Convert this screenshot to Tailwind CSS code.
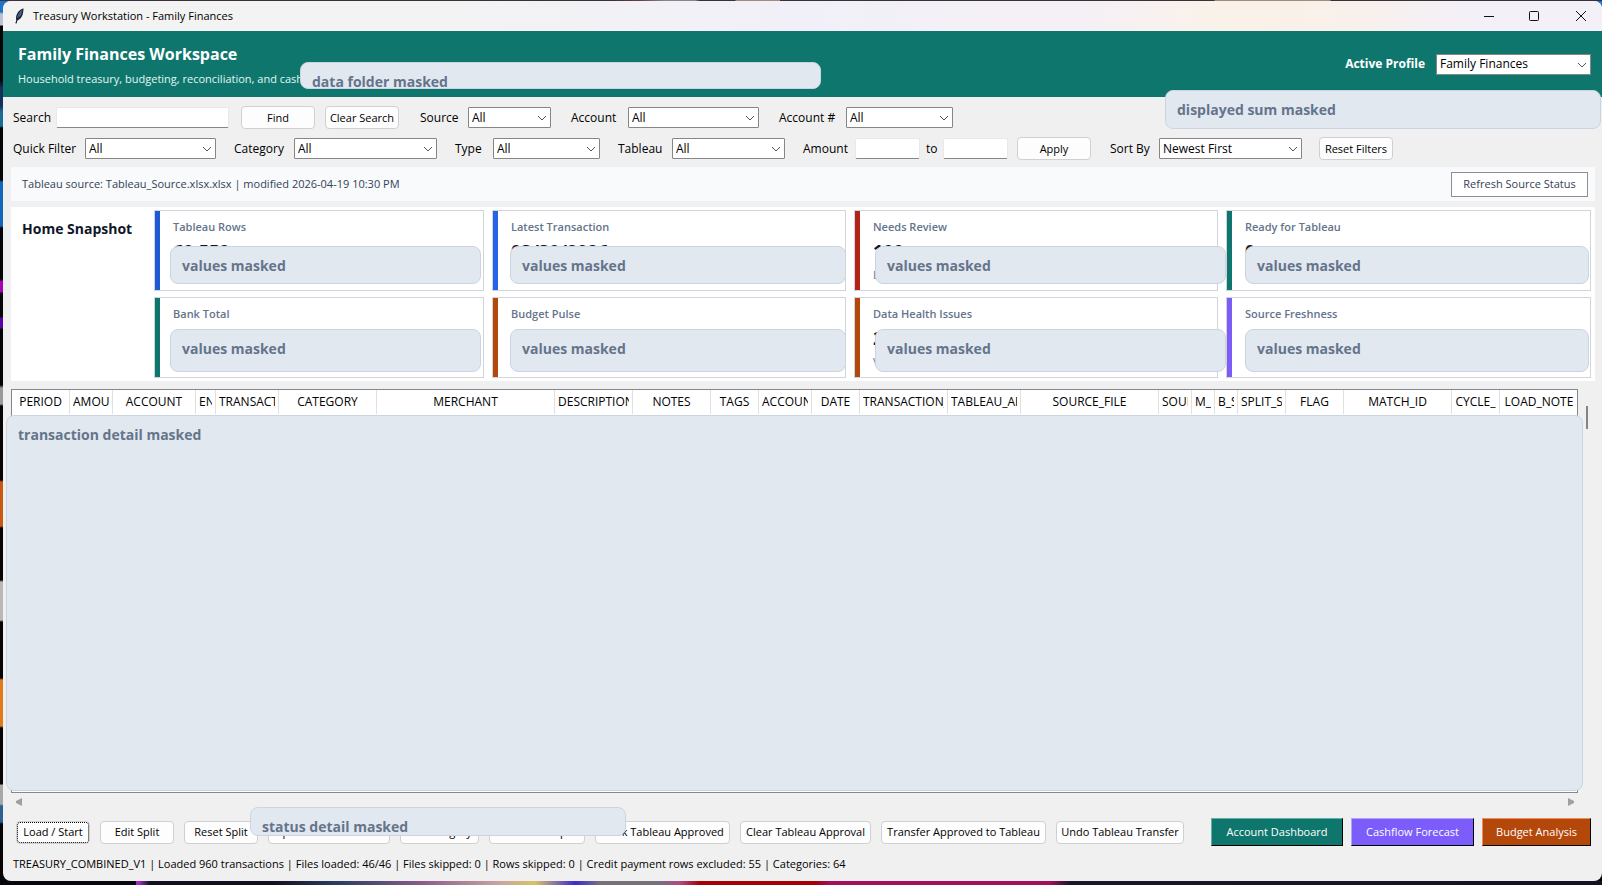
<!DOCTYPE html>
<html lang="en">
<head>
<meta charset="utf-8">
<title>Treasury Workstation - Family Finances</title>
<script src="https://cdn.jsdelivr.net/npm/@tailwindcss/browser@4"></script>
<style>
  .desk {
    background:
      linear-gradient(90deg, #08070f 0 136px, #a02bc0 136px 139px, #120f1e 150px 270px, #2b3f66 340px, #8a5a8c 420px, #c9a5a0 500px, #d8c06a 535px, #3a2bd0 575px, #77707c 600px 660px, #b04a80 680px, #a30008 700px 815px, #a0105c 830px 1050px, #1a1728 1070px, #15121f) bottom / 100% 4px no-repeat,
      linear-gradient(90deg, #3a2f3a 0 610px, #6b3c40 640px, #8a8490 665px 695px, #3a2f3a 700px 735px, #a08c78 736px 780px, #3a2f3a 780px 1214px, #a08c78 1215px 1330px, #3a2f3a 1331px) top / 100% 1px no-repeat,
      linear-gradient(180deg, #1f74c8 0 12px, #b8c4d0 14px 25px, #050507 26px 80px, #16305c 88px 106px, #1c6d96 112px 126px, #050507 128px 180px, #1467b8 182px 226px, #050507 228px 280px, #a800b4 281px 292px, #050507 293px 317px, #5a00a8 318px 328px, #050507 329px 385px, #9a9a9a 388px 404px, #050507 406px 480px, #c75a12 482px 526px, #050507 528px 580px, #b9b9b9 582px 620px, #050507 622px 678px, #e07a1a 680px 726px, #050507 728px 784px, #a8a8a8 785px 804px, #2c6090 806px 822px, #050507 824px);
  }
  .titlebar { background: linear-gradient(90deg, #f3f3f3 0, #f3f3f3 25%, #f1f0f8 50%, #f5f0f5 68%, #faf2e8 77%, #f8f0ea 84%, #f3f0f8 92%); }
</style>
</head>
<body class="desk h-screen min-h-[600px] flex flex-col pl-[3px] pt-px pb-1 text-[12px] leading-4 text-black" style="font-family:'Open Sans','Noto Sans',sans-serif">
<svg class="hidden"><symbol id="chev" viewBox="0 0 10 6"><path d="M1 1l4 4 4-4" fill="none" stroke="#555" stroke-width="1"/></symbol></svg>
<div class="flex-1 min-h-0 flex flex-col bg-[#f0f0f0] rounded-lg overflow-hidden">

  <!-- Title bar -->
  <div class="titlebar h-[30px] shrink-0 flex items-center pl-[11px]">
    <svg class="w-3 h-4 mr-[7px]" viewBox="0 0 12 16"><path d="M9.500 0.500C6 1 3 4.500 2.200 8.500c-.3 1.500-.2 2.500.2 3.500L1.500 15.500h1l.8-3C6.500 11.500 8.500 8 9 5c.3-1.800.5-3 .5-4.500z" fill="#16202c"/><path d="M8.500 1.500C5.500 3.500 3.500 7 2.900 11c2.500-1.500 4.500-4.500 5.200-7.500z" fill="#5d8fc9"/><path d="M8.500 2.500C6 5 3.500 9 2 15" stroke="#16202c" stroke-width=".8" fill="none"/></svg>
    <span class="text-[11px]">Treasury Workstation - Family Finances</span>
    <div class="ml-auto flex">
      <button aria-label="Minimize" class="w-[46px] h-7 flex items-center justify-center"><svg class="w-3 h-3" viewBox="0 0 12 12"><path d="M1 6.500h10" stroke="#111" fill="none"/></svg></button>
      <button aria-label="Maximize" class="w-[44px] h-7 flex items-center justify-center"><svg class="w-3 h-3" viewBox="0 0 12 12"><rect x="1.500" y="1.500" width="9" height="9" rx="1" stroke="#111" fill="none"/></svg></button>
      <button aria-label="Close" class="w-[46px] h-7 pl-1 flex items-center justify-center"><svg class="w-3 h-3" viewBox="0 0 12 12"><path d="M1 1l10 10M11 1L1 11" stroke="#111" fill="none"/></svg></button>
    </div>
  </div>

  <!-- Workspace header -->
  <header class="relative h-[66px] shrink-0 bg-[#0f766e] text-white flex items-center pl-[15px] pr-[11px]">
    <div class="flex-1 pt-[3px]">
      <h1 class="text-[16px] leading-6 font-bold">Family Finances Workspace</h1>
      <p class="pt-[3px] text-[11px] leading-5 text-[#e3f7f3]">Household treasury, budgeting, reconciliation, and cashflow</p>
    </div>
    <div class="flex items-center">
      <label for="profile" class="font-bold mr-[11px]">Active Profile</label>
      <div class="relative w-[155px]"><select id="profile" class="appearance-none block w-full h-[21px] bg-white border border-[#868686] text-black pl-[3px]"><option>Family Finances</option></select><svg class="absolute right-1 top-2 w-[10px] h-[6px] pointer-events-none"><use href="#chev"/></svg></div>
    </div>
    <div class="absolute left-[297px] top-[31px] w-[521px] h-[27px] rounded-lg bg-[#e2e8f0] border border-[#cbd5e1] text-[#64748b] text-[14px] font-bold pl-[11px] pt-[11px] leading-4 overflow-hidden">data folder masked</div>
    <div class="absolute right-px top-[59px] w-[436px] h-[39px] rounded-lg bg-[#e2e8f0] border border-[#cbd5e1] text-[#64748b] text-[14px] font-bold pl-[11px] pt-[11px] leading-4">displayed sum masked</div>
  </header>

  <!-- Filters -->
  <form class="shrink-0 px-[10px] pt-[9px] pb-[7px] flex flex-col gap-2 whitespace-nowrap">
    <div class="flex items-center h-[23px]">
      <label for="search" class="w-[43px]">Search</label>
      <input id="search" class="w-[173px] h-[21px] bg-white border border-[#e8e8e8] border-b-[#868686] rounded-[2px] px-1">
      <button type="button" class="ml-3 w-[74px] h-[23px] bg-[#fdfdfd] border border-[#d0d0d0] rounded text-[11px]">Find</button>
      <button type="button" class="ml-[10px] w-[74px] h-[23px] bg-[#fdfdfd] border border-[#d0d0d0] rounded text-[11px]">Clear Search</button>
      <label for="source" class="ml-[21px] w-[48px]">Source</label>
      <div class="relative w-[83px]"><select id="source" class="appearance-none block w-full h-[21px] bg-white border border-[#868686] rounded-[1px] pl-[3px]"><option>All</option></select><svg class="absolute right-1 top-2 w-[10px] h-[6px] pointer-events-none"><use href="#chev"/></svg></div>
      <label for="account" class="ml-5 w-[57px]">Account</label>
      <div class="relative w-[131px]"><select id="account" class="appearance-none block w-full h-[21px] bg-white border border-[#868686] rounded-[1px] pl-[3px]"><option>All</option></select><svg class="absolute right-1 top-2 w-[10px] h-[6px] pointer-events-none"><use href="#chev"/></svg></div>
      <label for="accountno" class="ml-5 w-[67px]">Account #</label>
      <div class="relative w-[107px]"><select id="accountno" class="appearance-none block w-full h-[21px] bg-white border border-[#868686] rounded-[1px] pl-[3px]"><option>All</option></select><svg class="absolute right-1 top-2 w-[10px] h-[6px] pointer-events-none"><use href="#chev"/></svg></div>
    </div>
    <div class="flex items-center h-[23px]">
      <label for="quick" class="w-[72px]">Quick Filter</label>
      <div class="relative w-[131px]"><select id="quick" class="appearance-none block w-full h-[21px] bg-white border border-[#868686] rounded-[1px] pl-[3px]"><option>All</option></select><svg class="absolute right-1 top-2 w-[10px] h-[6px] pointer-events-none"><use href="#chev"/></svg></div>
      <label for="category" class="ml-[18px] w-[60px]">Category</label>
      <div class="relative w-[143px]"><select id="category" class="appearance-none block w-full h-[21px] bg-white border border-[#868686] rounded-[1px] pl-[3px]"><option>All</option></select><svg class="absolute right-1 top-2 w-[10px] h-[6px] pointer-events-none"><use href="#chev"/></svg></div>
      <label for="type" class="ml-[18px] w-[38px]">Type</label>
      <div class="relative w-[107px]"><select id="type" class="appearance-none block w-full h-[21px] bg-white border border-[#868686] rounded-[1px] pl-[3px]"><option>All</option></select><svg class="absolute right-1 top-2 w-[10px] h-[6px] pointer-events-none"><use href="#chev"/></svg></div>
      <label for="tableau" class="ml-[18px] w-[54px]">Tableau</label>
      <div class="relative w-[113px]"><select id="tableau" class="appearance-none block w-full h-[21px] bg-white border border-[#868686] rounded-[1px] pl-[3px]"><option>All</option></select><svg class="absolute right-1 top-2 w-[10px] h-[6px] pointer-events-none"><use href="#chev"/></svg></div>
      <label for="amin" class="ml-[18px] w-[52px]">Amount</label>
      <input id="amin" class="w-[65px] h-[21px] bg-white border border-[#e8e8e8] border-b-[#868686] rounded-[2px] px-1">
      <label for="amax" class="ml-[6px] w-[17px]">to</label>
      <input id="amax" class="w-[65px] h-[21px] bg-white border border-[#e8e8e8] border-b-[#868686] rounded-[2px] px-1">
      <button type="button" class="ml-[9px] w-[74px] h-[23px] bg-[#fdfdfd] border border-[#d0d0d0] rounded text-[11px]">Apply</button>
      <label for="sort" class="ml-[19px] w-[49px]">Sort By</label>
      <div class="relative w-[143px]"><select id="sort" class="appearance-none block w-full h-[21px] bg-white border border-[#868686] rounded-[1px] pl-[3px]"><option>Newest First</option></select><svg class="absolute right-1 top-2 w-[10px] h-[6px] pointer-events-none"><use href="#chev"/></svg></div>
      <button type="button" class="ml-[17px] w-[74px] h-[23px] bg-[#fdfdfd] border border-[#d0d0d0] rounded text-[11px]">Reset Filters</button>
    </div>
  </form>

  <!-- Source status -->
  <div class="shrink-0 ml-2 mr-[7px] h-[34px] bg-[#f8fafc] flex items-center justify-between pl-[11px] pr-[7px] text-[11px] text-[#334155]">
    <span>Tableau source: Tableau_Source.xlsx.xlsx | modified 2026-04-19 10:30 PM</span>
    <button class="w-[137px] h-[25px] bg-white border border-[#8c8f96]">Refresh Source Status</button>
  </div>

  <!-- Home snapshot -->
  <section class="shrink-0 ml-2 mr-[7px] mt-[6px] bg-white flex pt-[3px] pb-[3px] pr-1">
    <h2 class="w-[143px] pl-[11px] pt-[9px] text-[14px] leading-5 font-bold text-[#0f172a]">Home Snapshot</h2>
    <div class="flex-1 grid grid-cols-[330fr_354fr_364fr_365fr] gap-x-2 gap-y-[6px]">
      <article class="relative h-[81px] border border-[#d1d5db] flex"><div class="w-[5px] bg-[#1d5bd6]"></div>
        <div class="pl-[13px] pt-2"><h3 class="text-[11px] font-semibold text-[#64748b]">Tableau Rows</h3><p class="pt-[6px] text-[18px] leading-5 font-bold text-[#0f172a]">60,559</p></div>
        <div class="absolute left-[15px] right-[2px] top-[35px] h-[38px] rounded-lg bg-[#e2e8f0] border border-[#cbd5e1] text-[#64748b] text-[14px] font-bold pl-[11px] pt-[11px] leading-4">values masked</div></article>
      <article class="relative h-[81px] border border-[#d1d5db] flex"><div class="w-[5px] bg-[#2563eb]"></div>
        <div class="pl-[13px] pt-2"><h3 class="text-[11px] font-semibold text-[#64748b]">Latest Transaction</h3><p class="pt-[6px] text-[18px] leading-5 font-bold text-[#0f172a]">03/30/2026</p></div>
        <div class="absolute left-[17px] right-[-1px] top-[35px] h-[38px] rounded-lg bg-[#e2e8f0] border border-[#cbd5e1] text-[#64748b] text-[14px] font-bold pl-[11px] pt-[11px] leading-4">values masked</div></article>
      <article class="relative h-[81px] border border-[#d1d5db] flex"><div class="w-[5px] bg-[#b42318]"></div>
        <div class="pl-[13px] pt-2"><h3 class="text-[11px] font-semibold text-[#64748b]">Needs Review</h3><p class="pt-[6px] text-[18px] leading-5 font-bold text-[#0f172a]">100</p><p class="pt-[6px] text-[11px] text-[#64748b]">Low</p></div>
        <div class="absolute left-5 right-[-9px] top-[35px] h-[38px] rounded-lg bg-[#e2e8f0] border border-[#cbd5e1] text-[#64748b] text-[14px] font-bold pl-[11px] pt-[11px] leading-4">values masked</div></article>
      <article class="relative h-[81px] border border-[#d1d5db] flex"><div class="w-[5px] bg-[#0f766e]"></div>
        <div class="pl-[13px] pt-2"><h3 class="text-[11px] font-semibold text-[#64748b]">Ready for Tableau</h3><p class="pt-[6px] text-[18px] leading-5 font-bold text-[#0f172a]">0</p></div>
        <div class="absolute left-[18px] right-px top-[35px] h-[38px] rounded-lg bg-[#e2e8f0] border border-[#cbd5e1] text-[#64748b] text-[14px] font-bold pl-[11px] pt-[11px] leading-4">values masked</div></article>
      <article class="relative h-[81px] border border-[#d1d5db] flex"><div class="w-[5px] bg-[#0f766e]"></div>
        <div class="pl-[13px] pt-2"><h3 class="text-[11px] font-semibold text-[#64748b]">Bank Total</h3></div>
        <div class="absolute left-[15px] right-[2px] top-[31px] h-[43px] rounded-lg bg-[#e2e8f0] border border-[#cbd5e1] text-[#64748b] text-[14px] font-bold pl-[11px] pt-[11px] leading-4">values masked</div></article>
      <article class="relative h-[81px] border border-[#d1d5db] flex"><div class="w-[5px] bg-[#b4470a]"></div>
        <div class="pl-[13px] pt-2"><h3 class="text-[11px] font-semibold text-[#64748b]">Budget Pulse</h3></div>
        <div class="absolute left-[17px] right-[-1px] top-[31px] h-[43px] rounded-lg bg-[#e2e8f0] border border-[#cbd5e1] text-[#64748b] text-[14px] font-bold pl-[11px] pt-[11px] leading-4">values masked</div></article>
      <article class="relative h-[81px] border border-[#d1d5db] flex"><div class="w-[5px] bg-[#b4470a]"></div>
        <div class="pl-[13px] pt-2"><h3 class="text-[11px] font-semibold text-[#64748b]">Data Health Issues</h3><p class="pt-[6px] text-[18px] leading-5 font-bold text-[#0f172a]">2</p><p class="pt-[6px] text-[11px] text-[#64748b]">View</p></div>
        <div class="absolute left-5 right-[-9px] top-[31px] h-[43px] rounded-lg bg-[#e2e8f0] border border-[#cbd5e1] text-[#64748b] text-[14px] font-bold pl-[11px] pt-[11px] leading-4">values masked</div></article>
      <article class="relative h-[81px] border border-[#d1d5db] flex"><div class="w-[5px] bg-[#7c5cf6]"></div>
        <div class="pl-[13px] pt-2"><h3 class="text-[11px] font-semibold text-[#64748b]">Source Freshness</h3></div>
        <div class="absolute left-[18px] right-px top-[31px] h-[43px] rounded-lg bg-[#e2e8f0] border border-[#cbd5e1] text-[#64748b] text-[14px] font-bold pl-[11px] pt-[11px] leading-4">values masked</div></article>
    </div>
  </section>

  <!-- Transactions -->
  <div class="flex-1 min-h-0 flex mt-2 ml-2">
    <div class="relative flex-1 min-w-0 bg-white border border-[#828790]">
      <table class="w-full table-fixed border-separate border-spacing-0">
        <colgroup><col class="w-[58px]"><col class="w-[43px]"><col class="w-[83px]"><col class="w-[20px]"><col class="w-[63px]"><col class="w-[98px]"><col class="w-[178px]"><col class="w-[78px]"><col class="w-[78px]"><col class="w-[48px]"><col class="w-[53px]"><col class="w-[48px]"><col class="w-[88px]"><col class="w-[73px]"><col class="w-[138px]"><col class="w-[33px]"><col class="w-[23px]"><col class="w-[23px]"><col class="w-[48px]"><col class="w-[58px]"><col class="w-[108px]"><col class="w-[48px]"><col class="w-[78px]"></colgroup>
        <thead><tr id="heads" class="h-6"></tr></thead>
      </table>
      <div class="absolute left-[-6px] right-[-6px] top-[25px] bottom-px rounded-lg bg-[#e2e8f0] border border-[#cbd5e1] text-[#64748b] text-[14px] font-bold pl-[11px] pt-[11px] leading-4">transaction detail masked</div>
    </div>
    <div class="w-6 shrink-0 pt-[17px] pl-2"><div class="w-[2px] h-[23px] bg-[#858585]"></div></div>
  </div>
  <div class="shrink-0 h-[18px] flex items-center justify-between pl-[13px] pr-[28px]">
    <svg class="w-[6px] h-2" viewBox="0 0 6 8"><path d="M6 0v8L0 5V3z" fill="#a0a0a0"/></svg>
    <svg class="w-[6px] h-2" viewBox="0 0 6 8"><path d="M0 0v8l6-3V3z" fill="#a0a0a0"/></svg>
  </div>

  <!-- Actions -->
  <div class="relative shrink-0 mt-[7px] h-[28px] flex items-center gap-[10px] pl-[13px] pr-[11px] text-[11px] whitespace-nowrap">
    <button class="w-[74px] h-[23px] bg-[#fdfdfd] border border-[#d0d0d0] rounded outline-1 outline-dotted outline-black -outline-offset-2">Load / Start</button>
    <button class="w-[74px] h-[23px] bg-[#fdfdfd] border border-[#d0d0d0] rounded">Edit Split</button>
    <button class="w-[74px] h-[23px] bg-[#fdfdfd] border border-[#d0d0d0] rounded">Reset Split</button>
    <button class="w-[122px] h-[23px] bg-[#fdfdfd] border border-[#d0d0d0] rounded">Open Tableau Source</button>
    <button class="w-[79px] h-[23px] bg-[#fdfdfd] border border-[#d0d0d0] rounded">Set Category</button>
    <button class="w-[96px] h-[23px] bg-[#fdfdfd] border border-[#d0d0d0] rounded">Match Receipts</button>
    <button class="w-[135px] h-[23px] bg-[#fdfdfd] border border-[#d0d0d0] rounded">Mark Tableau Approved</button>
    <button class="w-[131px] h-[23px] bg-[#fdfdfd] border border-[#d0d0d0] rounded">Clear Tableau Approval</button>
    <button class="w-[165px] h-[23px] bg-[#fdfdfd] border border-[#d0d0d0] rounded">Transfer Approved to Tableau</button>
    <button class="w-[128px] h-[23px] bg-[#fdfdfd] border border-[#d0d0d0] rounded">Undo Tableau Transfer</button>
    <div class="ml-auto flex gap-2 text-white">
      <button class="w-[132px] h-7 bg-[#0f766e] border border-t-[#5fb0a8] border-l-[#5fb0a8] border-b-black border-r-black">Account Dashboard</button>
      <button class="w-[123px] h-7 bg-[#7c5cfa] border border-t-[#b3a2ff] border-l-[#b3a2ff] border-b-black border-r-black">Cashflow Forecast</button>
      <button class="w-[109px] h-7 bg-[#b4470a] border border-t-[#ee8c5c] border-l-[#ee8c5c] border-b-black border-r-black">Budget Analysis</button>
    </div>
    <div class="absolute left-[247px] top-[-11px] w-[376px] h-[29px] rounded-lg bg-[#e2e8f0] border border-[#cbd5e1] text-[#64748b] text-[14px] font-bold pl-[11px] pt-[11px] leading-4 overflow-hidden">status detail masked</div>
  </div>

  <footer class="shrink-0 pl-[10px] pt-[9px] pb-[9px] text-[11px] leading-[17px] whitespace-nowrap">TREASURY_COMBINED_V1 | Loaded 960 transactions | Files loaded: 46/46 | Files skipped: 0 | Rows skipped: 0 | Credit payment rows excluded: 55 | Categories: 64</footer>
</div>
<script>
  const names = ['PERIOD','AMOUNT','ACCOUNT','ENT','TRANSACTION','CATEGORY','MERCHANT','DESCRIPTION','NOTES','TAGS','ACCOUNT','DATE','TRANSACTION_','TABLEAU_AP','SOURCE_FILE','SOUR','M_','B_S','SPLIT_S','FLAG','MATCH_ID','CYCLE_','LOAD_NOTE'];
  document.getElementById('heads').innerHTML = names.map(n =>
    `<th class="font-normal p-0 border-r border-[#e0e0e0] last:border-r-0"><div class="mx-[3px] overflow-hidden whitespace-nowrap text-center">${n}</div></th>`).join('');
</script>
</body>
</html>
